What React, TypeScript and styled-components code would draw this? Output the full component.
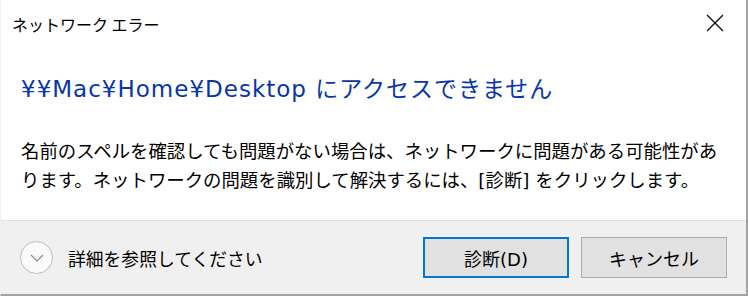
import React, { FC } from "react";
import styled, { createGlobalStyle } from "styled-components";

const GlobalStyle = createGlobalStyle`
  html, body {
    margin: 0;
    padding: 0;
    background: #ffffff;
  }
  body {
    font-family: "DejaVu Sans", "Noto Sans CJK JP", sans-serif;
    color: #000000;
  }
`;

const Window = styled.div`
  width: 748px;
  height: 296px;
  box-sizing: border-box;
  display: flex;
  flex-direction: column;
  background: #ffffff;
  border-left: 1px solid #f2f2f2;
  border-right: 2px solid #a3a3a3;
  border-bottom: 2px solid #a3a3a3;
`;

const TitleBar = styled.header`
  height: 46px;
  display: flex;
  align-items: center;
  justify-content: space-between;
  padding-left: 11px;
`;

const Title = styled.span`
  font-family: "Noto Sans CJK JP", sans-serif;
  font-size: 16px;
  line-height: 20px;
  margin-top: 2px;
`;

const CloseButton = styled.button`
  width: 46px;
  height: 44px;
  margin-right: 8px;
  border: none;
  background: transparent;
  padding: 0;
  display: flex;
  align-items: center;
  justify-content: center;
`;

const Content = styled.main`
  flex: 1;
  padding: 28px 20px 0 20px;
`;

const Heading = styled.h1`
  margin: 0;
  font-size: 23px;
  line-height: 30px;
  letter-spacing: 1px;
  font-weight: normal;
  color: #0836a8;
`;

const Message = styled.p`
  margin: 33px 0 0 0;
  font-size: 18.4px;
  line-height: 29px;
`;

const Footer = styled.footer`
  height: 74px;
  box-sizing: border-box;
  background: #f0f0f0;
  border-top: 1px solid #e2e2e2;
  display: flex;
  align-items: center;
  padding: 0 19px 0 19px;
`;

const Details = styled.div`
  display: flex;
  align-items: center;
  gap: 15px;
  flex: 1;
  font-size: 17.8px;
`;

const Chevron = styled.span`
  width: 33px;
  height: 33px;
  box-sizing: border-box;
  border-radius: 50%;
  border: 1px solid #bcbcbc;
  background: #fafafa;
  display: flex;
  align-items: center;
  justify-content: center;
`;

const Buttons = styled.div`
  display: flex;
  gap: 12px;
`;

const Button = styled.button<{ $primary?: boolean }>`
  width: 146px;
  height: 41px;
  box-sizing: border-box;
  background: #e1e1e1;
  border: ${(p) => (p.$primary ? "2px solid #0078d7" : "1px solid #adadad")};
  font-family: "DejaVu Sans", "Noto Sans CJK JP", sans-serif;
  font-size: 18px;
  color: #000000;
  padding: 0;
`;

const App: FC = () => (
  <>
    <GlobalStyle />
    <Window>
      <TitleBar>
        <Title>ネットワーク エラー</Title>
        <CloseButton aria-label="閉じる">
          <svg width="18" height="18" viewBox="0 0 18 18">
            <path
              d="M1 1 L17 17 M17 1 L1 17"
              stroke="#111"
              strokeWidth="1.4"
              fill="none"
            />
          </svg>
        </CloseButton>
      </TitleBar>
      <Content>
        <Heading>¥¥Mac¥Home¥Desktop にアクセスできません</Heading>
        <Message>
          名前のスペルを確認しても問題がない場合は、ネットワークに問題がある可能性があります。ネットワークの問題を識別して解決するには、[診断]
          をクリックします。
        </Message>
      </Content>
      <Footer>
        <Details>
          <Chevron>
            <svg width="14" height="8" viewBox="0 0 14 8">
              <path
                d="M1 1 L7 7 L13 1"
                stroke="#8a8a8a"
                strokeWidth="1.1"
                fill="none"
              />
            </svg>
          </Chevron>
          詳細を参照してください
        </Details>
        <Buttons>
          <Button $primary>診断(D)</Button>
          <Button>キャンセル</Button>
        </Buttons>
      </Footer>
    </Window>
  </>
);

export default App;
